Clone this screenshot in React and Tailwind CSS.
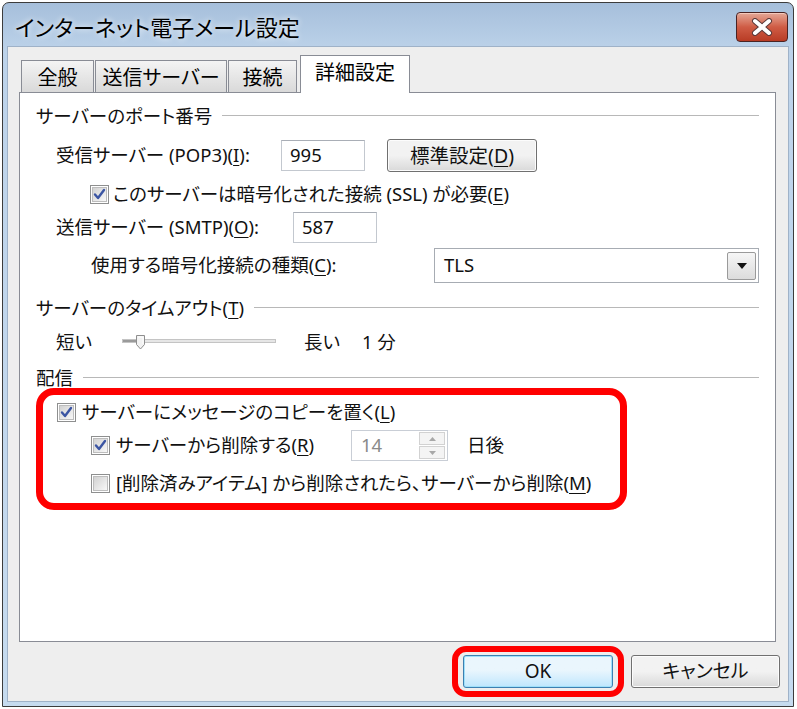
import React from 'react';

const jp = "font-['Noto_Sans','Noto_Sans_CJK_JP',sans-serif] [font-feature-settings:'palt']";

// underlined access key letter
const U = ({ children }) => <span className="underline decoration-1 underline-offset-[3px]">{children}</span>;

function CheckBox({ checked }) {
  return (
    <span className="flex h-[19px] w-[19px] shrink-0 items-center justify-center border border-[#8e8f8f] bg-white">
      <span className="flex h-[15px] w-[15px] items-center justify-center border border-[#bdbdbd] bg-linear-to-br from-[#d2d2d2] to-[#f8f8f8]">
        {checked && (
          <svg width="13" height="13" viewBox="0 0 13 13">
            <path d="M2 6.5 L5 10 L11 2" fill="none" stroke="#3b55a3" strokeWidth="2.4" strokeLinecap="round" strokeLinejoin="round" />
          </svg>
        )}
      </span>
    </span>
  );
}

function Tab({ label, w, selected }) {
  if (selected) {
    return (
      <div className={`relative z-10 -mb-px flex h-[38px] ${w} items-center justify-center border border-b-0 border-[#898c95] bg-white pb-[3px] text-[20px] text-black`}>
        {label}
      </div>
    );
  }
  return (
    <div className={`mt-[5px] flex h-[32px] ${w} items-center justify-center border border-b-0 border-[#898c95] bg-linear-to-b from-[#f4f4f4] to-[#d9d9d9] pt-[2px] text-[20px] text-black`}>
      {label}
    </div>
  );
}

function Section({ children }) {
  return (
    <div className="flex h-[24px] items-center gap-[10px]">
      <span className="whitespace-nowrap">{children}</span>
      <span className="h-[2px] flex-1 border-t border-b border-t-[#b8b8b8] border-b-white" />
    </div>
  );
}

function TextBox({ value, w }) {
  return (
    <div className={`flex h-[31px] ${w} items-center border border-[#c3c8cf] border-t-[#a9aeb6] bg-white pl-[8px]`}>
      {value}
    </div>
  );
}

function Slider() {
  return (
    <svg width="155" height="24" viewBox="0 0 155 24">
      <rect x="0.5" y="9.5" width="153" height="3" fill="#e6e6e6" stroke="#c4c4c4" />
      <rect x="1" y="10" width="13" height="2" fill="#9a9a9a" />
      <path d="M14.5 5.5 h8 v9 l-4 4.5 l-4 -4.5 z" fill="#f2f2f2" stroke="#8e8e8e" />
      <path d="M16 7 h5 v7" fill="none" stroke="#ffffff" />
    </svg>
  );
}

export default function App() {
  return (
    <div className={`h-[709px] w-[797px] overflow-hidden bg-white ${jp} text-[18.5px] leading-none text-[#111]`}>
      <div className="ml-[2px] mt-[2px] flex h-[705px] w-[792px] flex-col rounded-t-[7px] border border-[#3c3c3c] bg-linear-to-b from-[#a6bfdb] via-[#bdd3ea] via-[7%] to-[#c6dbef]">
        {/* title bar */}
        <div className="flex h-[43px] shrink-0 items-center pt-[5px]">
          <span className="pl-[12px] text-[22px] text-black [text-shadow:0_0_6px_#ffffff]">インターネット電子メール設定</span>
          <button className="ml-auto mr-[5px] flex h-[30px] w-[52px] items-center justify-center rounded-[4px] border border-[#4a2323] bg-linear-to-b from-[#e3a797] via-[#cf5c45] via-50% to-[#b83b24] shadow-[inset_0_1px_0_#f4c8bb]">
            <svg width="26" height="18" viewBox="0 0 26 18">
              <path d="M6 3 L20 15 M20 3 L6 15" stroke="#5a3a3a" strokeWidth="6" strokeLinecap="round" />
              <path d="M6 3 L20 15 M20 3 L6 15" stroke="#ffffff" strokeWidth="4" strokeLinecap="round" />
            </svg>
          </button>
        </div>

        {/* body */}
        <div className="mx-[4px] mb-[4px] flex flex-1 flex-col border border-[#9fb2c8] bg-[#eeeeee]">
          <div className="pl-[11px] pt-[8px]">
            <div className="ml-[2px] flex items-start gap-[1px]">
              <Tab label="全般" w="w-[73px]" />
              <Tab label="送信サーバー" w="w-[132px]" />
              <Tab label="接続" w="w-[69px]" />
              <div className="w-[1px]" />
              <Tab label="詳細設定" w="w-[110px]" selected />
            </div>

            {/* panel */}
            <div className="h-[550px] w-[757px] border border-[#898c95] bg-white px-[16px] pt-[11px]">
              <Section>サーバーのポート番号</Section>

              <div className="mt-[11px] flex h-[33px] items-center pl-[20px]">
                <span className="w-[225px]">受信サーバー (POP3)(<U>I</U>):</span>
                <TextBox value="995" w="w-[84px]" />
                <button className="ml-[22px] flex h-[33px] w-[150px] items-center justify-center rounded-[3px] border border-[#707070] bg-linear-to-b from-[#f2f2f2] from-50% to-[#d9d9d9] text-[19.5px] shadow-[inset_0_0_0_1px_#fcfcfc]">
                  標準設定(<U>D</U>)
                </button>
              </div>

              <div className="mt-[8px] flex h-[28px] items-center gap-[4px] pl-[54px]">
                <CheckBox checked />
                <span>このサーバーは暗号化された接続 (SSL) が必要(<U>E</U>)</span>
              </div>

              <div className="mt-[4px] flex h-[30px] items-center pl-[20px]">
                <span className="w-[237px]">送信サーバー (SMTP)(<U>O</U>):</span>
                <TextBox value="587" w="w-[84px]" />
              </div>

              <div className="mt-[6px] flex h-[35px] items-center pl-[55px]">
                <span className="w-[343px]">使用する暗号化接続の種類(<U>C</U>):</span>
                <div className="flex h-[35px] w-[325px] items-center border border-[#a7acb3] bg-white pl-[9px] pr-[2px]">
                  <span>TLS</span>
                  <span className="ml-auto flex h-[28px] w-[29px] items-center justify-center rounded-[2px] border border-[#9a9a9a] bg-linear-to-b from-[#f6f6f6] to-[#dcdcdc]">
                    <svg width="10" height="6" viewBox="0 0 10 6">
                      <path d="M0 0 H10 L5 6 Z" fill="#111" />
                    </svg>
                  </span>
                </div>
              </div>

              <div className="mt-[13px]">
                <Section>サーバーのタイムアウト(<U>T</U>)</Section>
              </div>

              <div className="mt-[10px] flex h-[24px] items-center pl-[20px]">
                <span className="w-[66px]">短い</span>
                <Slider />
                <span className="ml-[27px]">長い</span>
                <span className="ml-[22px]">1 分</span>
              </div>

              <div className="mt-[12px]">
                <Section>配信</Section>
              </div>

              {/* highlighted group */}
              <div className="-mt-[2px] h-[122px] w-[591px] rounded-[18px] border-[7px] border-[#ff0000] pt-[5px]">
                <div className="flex h-[24px] items-center gap-[6px] pl-[14px]">
                  <CheckBox checked />
                  <span>サーバーにメッセージのコピーを置く(<U>L</U>)</span>
                </div>
                <div className="mt-[6px] flex h-[31px] items-center pl-[48px]">
                  <div className="flex w-[260px] items-center gap-[6px]">
                    <CheckBox checked />
                    <span>サーバーから削除する(<U>R</U>)</span>
                  </div>
                  <div className="flex h-[31px] w-[97px] items-center border border-[#c9ced6] bg-white pl-[9px] pr-[2px] text-[#8a8a8a]">
                    <span>14</span>
                    <div className="ml-auto flex h-[27px] w-[26px] flex-col gap-[1px]">
                      <span className="flex flex-1 items-center justify-center border border-[#d2d2d2] bg-[#f4f4f4]">
                        <svg width="7" height="4" viewBox="0 0 7 4"><path d="M0 4 L3.5 0 L7 4 Z" fill="#a8a8a8" /></svg>
                      </span>
                      <span className="flex flex-1 items-center justify-center border border-[#d2d2d2] bg-[#f4f4f4]">
                        <svg width="7" height="4" viewBox="0 0 7 4"><path d="M0 0 L3.5 4 L7 0 Z" fill="#a8a8a8" /></svg>
                      </span>
                    </div>
                  </div>
                  <span className="ml-[19px]">日後</span>
                </div>
                <div className="mt-[10px] flex h-[24px] items-center gap-[6px] pl-[48px]">
                  <CheckBox />
                  <span>[削除済みアイテム] から削除されたら、サーバーから削除(<U>M</U>)</span>
                </div>
              </div>
            </div>
          </div>

          {/* buttons */}
          <div className="mt-[4px] flex items-center justify-end pr-[8px]">
            <div className="rounded-[14px] border-[6px] border-[#ff0000] px-[5px] py-[3px]">
              <button className="flex h-[33px] w-[150px] items-center justify-center rounded-[3px] border border-[#3c7fb1] bg-linear-to-b from-[#eaf6fd] from-45% to-[#bee6fd] text-[19px] shadow-[inset_0_0_0_1px_#9fe0fa]">
                OK
              </button>
            </div>
            <button className="ml-[7px] flex h-[33px] w-[149px] items-center justify-center rounded-[3px] border border-[#707070] bg-linear-to-b from-[#f2f2f2] from-50% to-[#d9d9d9] text-[19px] shadow-[inset_0_0_0_1px_#fcfcfc]">
              キャンセル
            </button>
          </div>
        </div>
      </div>
    </div>
  );
}
